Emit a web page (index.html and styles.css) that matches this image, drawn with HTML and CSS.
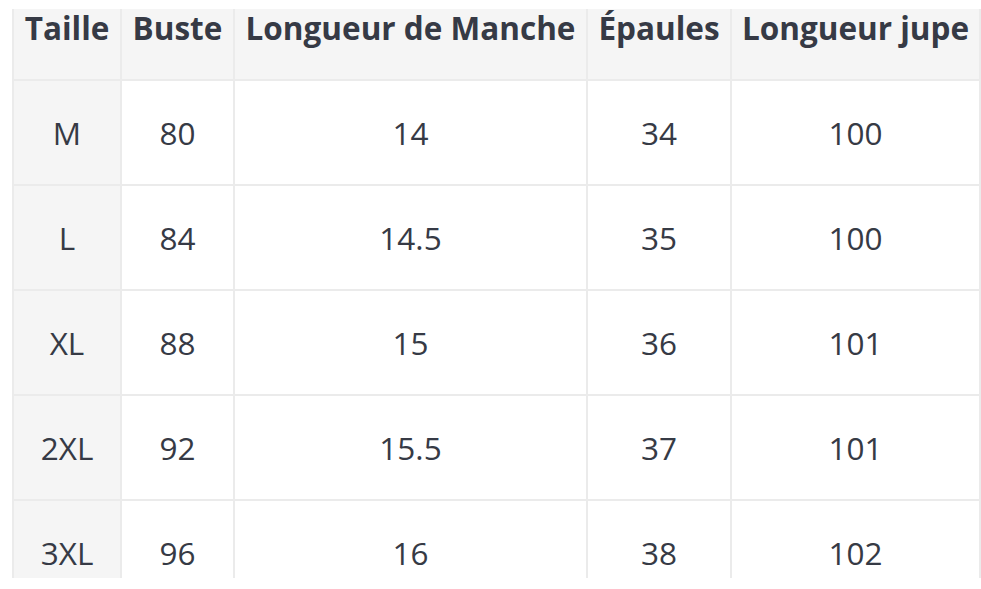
FILE: index.html
```html
<!DOCTYPE html>
<html lang="fr">
<head>
<meta charset="utf-8">
<link rel="stylesheet" href="styles.css">
</head>
<body>
<div class="wrap">
<table class="size-table">
<colgroup>
<col class="c1"><col class="c2"><col class="c3"><col class="c4"><col class="c5">
</colgroup>
<thead>
<tr><th>Taille</th><th>Buste</th><th>Longueur de Manche</th><th>Épaules</th><th>Longueur jupe</th></tr>
</thead>
<tbody>
<tr><td>M</td><td>80</td><td>14</td><td>34</td><td>100</td></tr>
<tr><td>L</td><td>84</td><td>14.5</td><td>35</td><td>100</td></tr>
<tr><td>XL</td><td>88</td><td>15</td><td>36</td><td>101</td></tr>
<tr><td>2XL</td><td>92</td><td>15.5</td><td>37</td><td>101</td></tr>
<tr><td>3XL</td><td>96</td><td>16</td><td>38</td><td>102</td></tr>
</tbody>
</table>
</div>
</body>
</html>
```

FILE: styles.css
```css
html, body {
  margin: 0;
  padding: 0;
  background: #ffffff;
  overflow: hidden;
}
.wrap {
  padding: 9px 0 0 12px;
  height: 569px;
  overflow: hidden;
}
.size-table {
  border-collapse: collapse;
  table-layout: fixed;
  width: 969px;
  font-family: "Open Sans", sans-serif;
  color: #363a45;
}
.c1 { width: 108px; }
.c2 { width: 113px; }
.c3 { width: 353px; }
.c4 { width: 144px; }
.c5 { width: 249px; }
.size-table th,
.size-table td {
  border: 2px solid #ebebeb;
  text-align: center;
  padding: 0;
  white-space: nowrap;
}
.size-table thead tr th {
  border-top: none;
  background: #f5f5f5;
  font-weight: 700;
  font-size: 31.5px;
  height: 69px;
  vertical-align: top;
  padding-top: 1px;
  line-height: 36px;
}
.size-table td {
  font-size: 31.5px;
  height: 103px;
  line-height: 40px;
}
.size-table td:first-child {
  background: #f5f5f5;
}
```
